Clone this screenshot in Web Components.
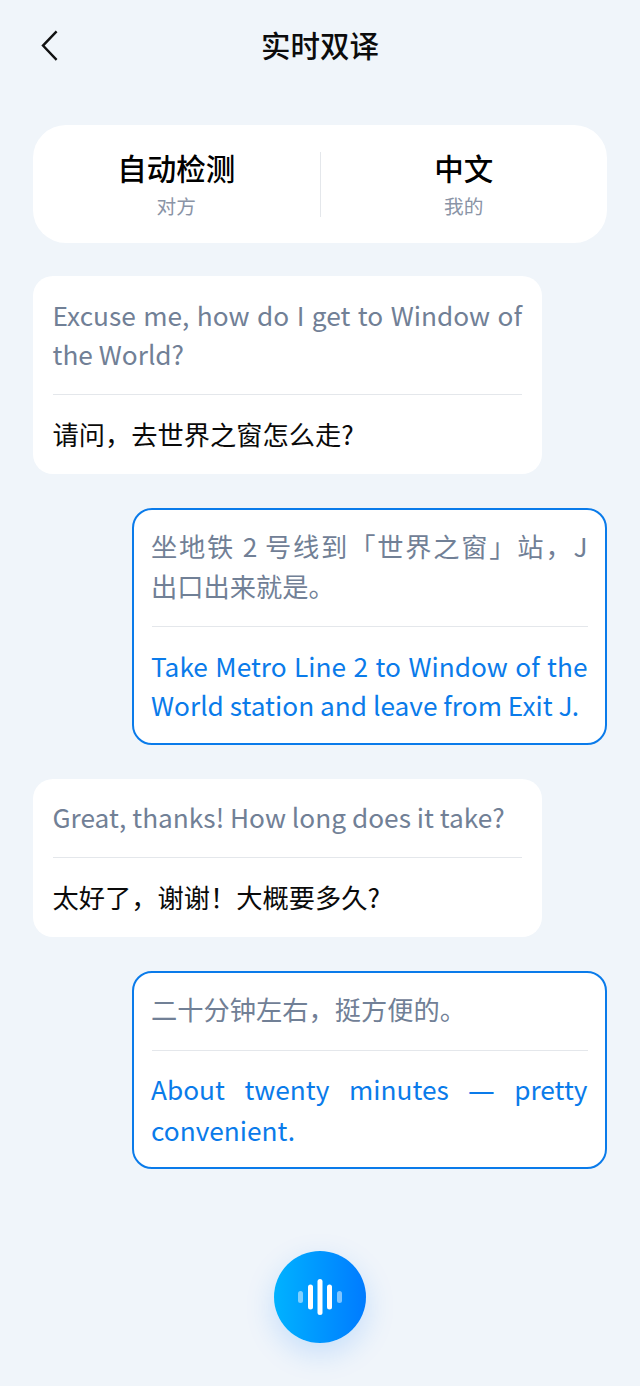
<!DOCTYPE html>
<html lang="zh-CN">
<head>
<meta charset="utf-8">
<title>实时双译</title>
<style>
  html, body { margin: 0; padding: 0; }
  body {
    width: 640px;
    height: 1386px;
    overflow: hidden;
    background: #f0f5fa;
    font-family: "Noto Sans CJK SC", "Noto Sans", sans-serif;
  }
  translate-app { height: 1386px; }
</style>
</head>
<body>
<translate-app>
  <app-header slot="header">实时双译</app-header>
  <lang-bar slot="langs" left="自动检测" left-sub="对方" right="中文" right-sub="我的"></lang-bar>
  <chat-bubble source="Excuse me, how do I get to Window of the World?" target="请问，去世界之窗怎么走?"></chat-bubble>
  <chat-bubble mine source="坐地铁 2 号线到「世界之窗」站，J 出口出来就是。" target="Take Metro Line 2 to Window of the World station and leave from Exit J."></chat-bubble>
  <chat-bubble source="Great, thanks! How long does it take?" target="太好了，谢谢！大概要多久?"></chat-bubble>
  <chat-bubble mine source="二十分钟左右，挺方便的。" target="About twenty minutes — pretty convenient."></chat-bubble>
  <mic-button slot="footer"></mic-button>
</translate-app>

<script>
class TranslateApp extends HTMLElement {
  constructor() {
    super();
    this.attachShadow({ mode: 'open' });
    this.shadowRoot.innerHTML = `
      <style>
        :host { display: flex; flex-direction: column; }
        .langs { display: block; padding: 33px 33px 33px; }
        .list {
          display: flex;
          flex-direction: column;
          gap: 34px;
          padding: 0 33px;
        }
        .foot {
          display: flex;
          justify-content: center;
          margin-top: auto;
          padding-bottom: 43px;
        }
      </style>
      <slot name="header"></slot>
      <div class="langs"><slot name="langs"></slot></div>
      <div class="list"><slot></slot></div>
      <div class="foot"><slot name="footer"></slot></div>
    `;
  }
}

class AppHeader extends HTMLElement {
  constructor() {
    super();
    this.attachShadow({ mode: 'open' });
    this.shadowRoot.innerHTML = `
      <style>
        :host {
          display: flex;
          align-items: center;
          justify-content: center;
          box-sizing: border-box;
          height: 92px;
          padding-bottom: 4px;
          position: relative;
          font-size: 29.5px;
          font-weight: 500;
          color: #0c0c0c;
        }
        svg { position: absolute; left: 35px; top: 30px; }
      </style>
      <svg width="26" height="32" viewBox="0 0 26 32" fill="none">
        <path d="M21.6 1.4 8 15.6 21.6 29.8" stroke="#111" stroke-width="2.4"/>
      </svg>
      <slot></slot>
    `;
  }
}

class LangBar extends HTMLElement {
  constructor() {
    super();
    this.attachShadow({ mode: 'open' });
    this.shadowRoot.innerHTML = `
      <style>
        :host {
          display: grid;
          grid-template-columns: 1fr 1px 1fr;
          align-items: center;
          height: 118px;
          background: #fff;
          border-radius: 33px;
        }
        .side { display: flex; flex-direction: column; align-items: center; padding-bottom: 2px; }
        .name { font-size: 29.5px; line-height: 42px; font-weight: 500; color: #000; margin-bottom: 3px; }
        .sub { font-size: 19.7px; line-height: 30px; color: #8a94a6; }
        .line { width: 1px; height: 65px; background: #e4e7eb; }
      </style>
      <div class="side">
        <span class="name">${this.getAttribute('left')}</span>
        <span class="sub">${this.getAttribute('left-sub')}</span>
      </div>
      <div class="line"></div>
      <div class="side">
        <span class="name">${this.getAttribute('right')}</span>
        <span class="sub">${this.getAttribute('right-sub')}</span>
      </div>
    `;
  }
}

class ChatBubble extends HTMLElement {
  constructor() {
    super();
    this.attachShadow({ mode: 'open' });
    let target = this.getAttribute('target');
    // the CJK font's em dash is too thin, so that one glyph gets its own font
    if (target.includes('—')) {
      target = target.split(' ')
        .map((word) => `<span${word === '—' ? ' class="dash"' : ''}>${word}</span>`)
        .join(' ');
    }
    this.shadowRoot.innerHTML = `
      <style>
        :host {
          display: block;
          box-sizing: border-box;
          width: 509px;
          padding: 19.7px 20px;
          background: #fff;
          border-radius: 20px;
          font-size: 26.26px;
          line-height: 39.4px;
          text-align: justify;
        }
        :host([mine]) {
          align-self: flex-end;
          width: 475px;
          padding: 17.5px 17.5px 17px;
          border: 2px solid #0a7bea;
        }
        .source, .target { margin-left: -0.5px; }
        .source { color: #718096; }
        .target { color: #0a0a0a; }
        :host([mine]) .target { color: #0a7bea; }
        .dash { font-family: "Noto Sans", sans-serif; }
        hr {
          border: 0;
          height: 1px;
          margin: 19.5px 0;
          background: #e4e7eb;
        }
        :host([mine]) hr { margin: 20px 0 19.8px; }
      </style>
      <div class="source">${this.getAttribute('source')}</div>
      <hr>
      <div class="target">${target}</div>
    `;
  }
}

class MicButton extends HTMLElement {
  constructor() {
    super();
    this.attachShadow({ mode: 'open' });
    this.shadowRoot.innerHTML = `
      <style>
        :host {
          display: flex;
          align-items: center;
          justify-content: center;
          width: 92px;
          height: 92px;
          border-radius: 50%;
          background: linear-gradient(90deg, #00b2ff, #007bff);
          box-shadow: 0 10px 30px rgba(0, 123, 255, 0.18);
        }
      </style>
      <svg width="46" height="36" viewBox="0 0 46 36">
        <g fill="#fff">
          <rect x="1" y="12" width="5" height="12" rx="2.5" opacity=".5"/>
          <rect x="11" y="5.5" width="5" height="25" rx="2.5"/>
          <rect x="20.5" y="0" width="5" height="36" rx="2.5"/>
          <rect x="30" y="5.5" width="5" height="25" rx="2.5"/>
          <rect x="40" y="12" width="5" height="12" rx="2.5" opacity=".5"/>
        </g>
      </svg>
    `;
  }
}

customElements.define('translate-app', TranslateApp);
customElements.define('app-header', AppHeader);
customElements.define('lang-bar', LangBar);
customElements.define('chat-bubble', ChatBubble);
customElements.define('mic-button', MicButton);
</script>
</body>
</html>
